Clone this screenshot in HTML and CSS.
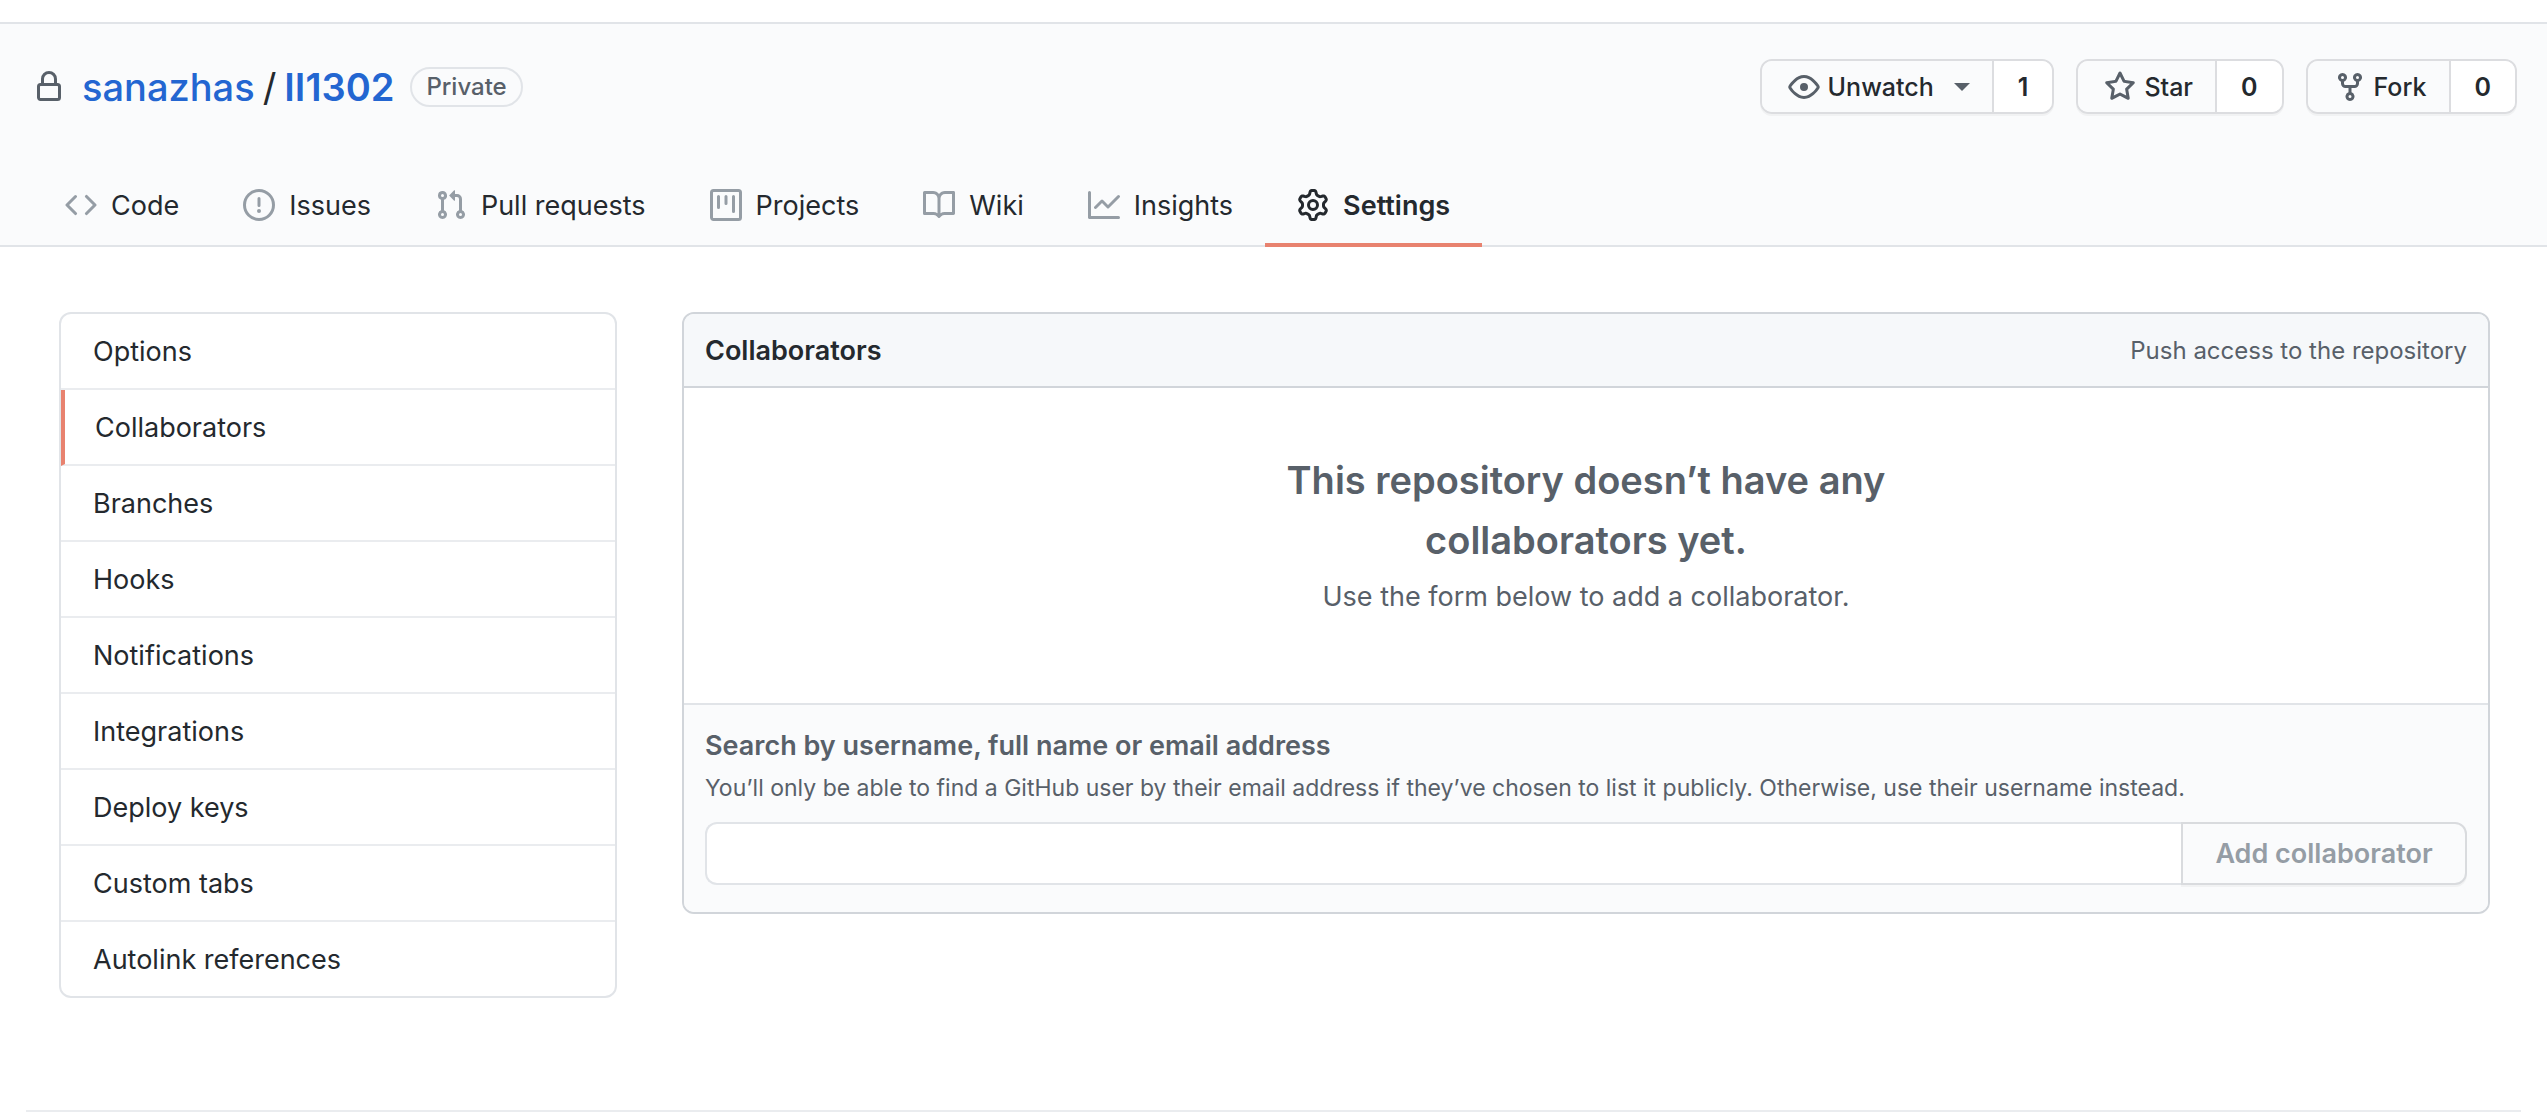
FILE: index.html
```html
<!DOCTYPE html>
<html lang="en">
<head>
    <meta charset="UTF-8">
    <meta name="viewport" content="width=device-width, initial-scale=1.0">
    <title>Collaborators</title>
    <link rel="stylesheet" href="styles.css">
</head>
<body>
    <header class="repo-head">
        <div class="title-row">
            <div class="repo-title">
                <svg class="lock" width="32" height="32" viewBox="0 0 16 16"><path fill-rule="evenodd" d="M4 4v2h-.25A1.75 1.75 0 002 7.75v5.5c0 .966.784 1.75 1.75 1.75h8.5A1.75 1.75 0 0014 13.25v-5.5A1.75 1.75 0 0012.25 6H12V4a4 4 0 10-8 0zm6.5 2V4a2.5 2.5 0 00-5 0v2h5zM12 7.5h.25a.25.25 0 01.25.25v5.5a.25.25 0 01-.25.25h-8.5a.25.25 0 01-.25-.25v-5.5a.25.25 0 01.25-.25H12z"/></svg>
                <a class="repo-link" href="#">sanazhas</a>
                <span class="slash">/</span>
                <a class="repo-link repo-name" href="#">II1302</a>
                <span class="badge">Private</span>
            </div>
            <div class="actions">
                <div class="btn-group">
                    <a class="btn" href="#">
                        <svg width="32" height="32" viewBox="0 0 16 16"><path fill-rule="evenodd" d="M1.679 7.932c.412-.621 1.242-1.75 2.366-2.717C5.175 4.242 6.527 3.5 8 3.5c1.473 0 2.824.742 3.955 1.715 1.124.967 1.954 2.096 2.366 2.717a.119.119 0 010 .136c-.412.621-1.242 1.75-2.366 2.717C10.825 11.758 9.473 12.5 8 12.5c-1.473 0-2.824-.742-3.955-1.715C2.92 9.818 2.09 8.69 1.679 8.068a.119.119 0 010-.136zM8 2c-1.981 0-3.67.992-4.933 2.078C1.797 5.169.88 6.423.43 7.1a1.619 1.619 0 000 1.798c.45.678 1.367 1.932 2.637 3.024C4.329 13.008 6.019 14 8 14c1.981 0 3.67-.992 4.933-2.078 1.27-1.091 2.187-2.345 2.637-3.023a1.619 1.619 0 000-1.798c-.45-.678-1.367-1.932-2.637-3.023C11.671 2.992 9.981 2 8 2zm0 8a2 2 0 100-4 2 2 0 000 4z"/></svg>
                        Unwatch
                        <span class="caret"></span>
                    </a>
                    <a class="count" href="#">1</a>
                </div>
                <div class="btn-group">
                    <a class="btn" href="#">
                        <svg width="32" height="32" viewBox="0 0 16 16"><path fill-rule="evenodd" d="M8 .25a.75.75 0 01.673.418l1.882 3.815 4.21.612a.75.75 0 01.416 1.279l-3.046 2.97.719 4.192a.75.75 0 01-1.088.791L8 12.347l-3.766 1.98a.75.75 0 01-1.088-.79l.72-4.194L.818 6.374a.75.75 0 01.416-1.28l4.21-.611L7.327.668A.75.75 0 018 .25zm0 2.445L6.615 5.5a.75.75 0 01-.564.41l-3.097.45 2.24 2.184a.75.75 0 01.216.664l-.528 3.084 2.769-1.456a.75.75 0 01.698 0l2.77 1.456-.53-3.084a.75.75 0 01.216-.664l2.24-2.183-3.096-.45a.75.75 0 01-.564-.41L8 2.694v.001z"/></svg>
                        Star
                    </a>
                    <a class="count" href="#">0</a>
                </div>
                <div class="btn-group">
                    <a class="btn" href="#">
                        <svg width="32" height="32" viewBox="0 0 16 16"><path fill-rule="evenodd" d="M5 3.25a.75.75 0 11-1.5 0 .75.75 0 011.5 0zm0 2.122a2.25 2.25 0 10-1.5 0v.878A2.25 2.25 0 005.75 8.5h1.5v2.128a2.251 2.251 0 101.5 0V8.5h1.5a2.25 2.25 0 002.25-2.25v-.878a2.25 2.25 0 10-1.5 0v.878a.75.75 0 01-.75.75h-4.5A.75.75 0 015 6.25v-.878zm3.75 7.378a.75.75 0 11-1.5 0 .75.75 0 011.5 0zm3-8.75a.75.75 0 100-1.5.75.75 0 000 1.5z"/></svg>
                        Fork
                    </a>
                    <a class="count" href="#">0</a>
                </div>
            </div>
        </div>
        <nav class="tabs">
            <a class="tab" href="#">
                <svg width="32" height="32" viewBox="0 0 16 16"><path fill-rule="evenodd" d="M4.72 3.22a.75.75 0 011.06 1.06L2.06 8l3.72 3.72a.75.75 0 11-1.06 1.06L.47 8.53a.75.75 0 010-1.06l4.25-4.25zm6.56 0a.75.75 0 10-1.06 1.06L13.94 8l-3.72 3.72a.75.75 0 101.06 1.06l4.25-4.25a.75.75 0 000-1.06l-4.25-4.25z"/></svg>
                Code
            </a>
            <a class="tab" href="#">
                <svg width="32" height="32" viewBox="0 0 16 16"><path fill-rule="evenodd" d="M8 1.5a6.5 6.5 0 100 13 6.5 6.5 0 000-13zM0 8a8 8 0 1116 0A8 8 0 010 8zm9 3a1 1 0 11-2 0 1 1 0 012 0zm-.25-6.25a.75.75 0 00-1.5 0v3.5a.75.75 0 001.5 0v-3.5z"/></svg>
                Issues
            </a>
            <a class="tab" href="#">
                <svg width="32" height="32" viewBox="0 0 16 16"><path fill-rule="evenodd" d="M7.177 3.073L9.573.677A.25.25 0 0110 .854v4.792a.25.25 0 01-.427.177L7.177 3.427a.25.25 0 010-.354zM3.75 2.5a.75.75 0 100 1.5.75.75 0 000-1.5zm-2.25.75a2.25 2.25 0 113 2.122v5.256a2.251 2.251 0 11-1.5 0V5.372A2.25 2.25 0 011.5 3.25zM11 2.5h-1V4h1a1 1 0 011 1v5.628a2.251 2.251 0 101.5 0V5A2.5 2.5 0 0011 2.5zm1 10.25a.75.75 0 111.5 0 .75.75 0 01-1.5 0zM3.75 12a.75.75 0 100 1.5.75.75 0 000-1.5z"/></svg>
                Pull requests
            </a>
            <a class="tab" href="#">
                <svg width="32" height="32" viewBox="0 0 16 16"><path fill-rule="evenodd" d="M1.75 0A1.75 1.75 0 000 1.75v12.5C0 15.216.784 16 1.75 16h12.5A1.75 1.75 0 0016 14.25V1.75A1.75 1.75 0 0014.25 0H1.75zM1.5 1.75a.25.25 0 01.25-.25h12.5a.25.25 0 01.25.25v12.5a.25.25 0 01-.25.25H1.75a.25.25 0 01-.25-.25V1.75zM11.75 3a.75.75 0 00-.75.75v7.5a.75.75 0 001.5 0v-7.5a.75.75 0 00-.75-.75zm-8.25.75a.75.75 0 011.5 0v5.5a.75.75 0 01-1.5 0v-5.5zM8 3a.75.75 0 00-.75.75v3.5a.75.75 0 001.5 0v-3.5A.75.75 0 008 3z"/></svg>
                Projects
            </a>
            <a class="tab" href="#">
                <svg width="32" height="32" viewBox="0 0 16 16"><path fill-rule="evenodd" d="M0 1.75A.75.75 0 01.75 1h4.253c1.227 0 2.317.59 3 1.501A3.744 3.744 0 0111.006 1h4.245a.75.75 0 01.75.75v10.5a.75.75 0 01-.75.75h-4.507a2.25 2.25 0 00-1.591.659l-.622.621a.75.75 0 01-1.06 0l-.622-.621A2.25 2.25 0 005.258 13H.75a.75.75 0 01-.75-.75V1.75zm8.755 3a2.25 2.25 0 012.25-2.25H14.5v9h-3.757c-.71 0-1.4.201-1.992.572l.004-7.322zm-1.504 7.324l.004-5.073-.002-2.253A2.25 2.25 0 005.003 2.5H1.5v9h3.757a3.75 3.75 0 011.994.574z"/></svg>
                Wiki
            </a>
            <a class="tab" href="#">
                <svg width="32" height="32" viewBox="0 0 16 16"><path fill-rule="evenodd" d="M1.5 1.75a.75.75 0 00-1.5 0v12.5c0 .414.336.75.75.75h14.5a.75.75 0 000-1.5H1.5V1.75zm14.28 2.53a.75.75 0 00-1.06-1.06L10 7.94 7.53 5.47a.75.75 0 00-1.06 0L3.22 8.72a.75.75 0 001.06 1.06L7 7.06l2.47 2.47a.75.75 0 001.06 0l5.25-5.25z"/></svg>
                Insights
            </a>
            <a class="tab selected" href="#">
                <svg width="32" height="32" viewBox="0 0 16 16"><path fill-rule="evenodd" d="M7.429 1.525a6.593 6.593 0 011.142 0c.036.003.108.036.137.146l.289 1.105c.147.56.55.967.997 1.189.174.086.341.183.501.29.417.278.97.423 1.53.27l1.102-.303c.11-.03.175.016.195.046.219.31.41.641.573.989.014.031.022.11-.059.19l-.815.806c-.411.406-.562.957-.53 1.456a4.588 4.588 0 010 .582c-.032.499.119 1.05.53 1.456l.815.806c.08.08.073.159.059.19a6.494 6.494 0 01-.573.99c-.02.029-.086.074-.195.045l-1.103-.303c-.559-.153-1.112-.008-1.529.27-.16.107-.327.204-.5.29-.449.222-.851.628-.998 1.189l-.289 1.105c-.029.11-.101.143-.137.146a6.613 6.613 0 01-1.142 0c-.036-.003-.108-.037-.137-.146l-.289-1.105c-.147-.56-.55-.967-.997-1.189a4.502 4.502 0 01-.501-.29c-.417-.278-.97-.423-1.53-.27l-1.102.303c-.11.03-.175-.016-.195-.046a6.492 6.492 0 01-.573-.989c-.014-.031-.022-.11.059-.19l.815-.806c.411-.406.562-.957.53-1.456a4.587 4.587 0 010-.582c.032-.499-.119-1.05-.53-1.456l-.815-.806c-.08-.08-.073-.159-.059-.19a6.44 6.44 0 01.573-.99c.02-.029.086-.075.195-.045l1.103.303c.559.153 1.112.008 1.529-.27.16-.107.327-.204.5-.29.449-.222.851-.628.998-1.189l.289-1.105c.029-.11.101-.143.137-.146zM8 0c-.236 0-.47.01-.701.03-.743.065-1.29.615-1.458 1.261l-.29 1.106c-.017.066-.078.158-.211.224a5.994 5.994 0 00-.668.386c-.123.082-.233.09-.3.071L3.27 2.776c-.644-.177-1.392.02-1.82.63a7.977 7.977 0 00-.704 1.217c-.315.675-.111 1.422.363 1.891l.815.806c.05.048.098.147.088.294a6.084 6.084 0 000 .772c.01.147-.038.246-.088.294l-.815.806c-.474.469-.678 1.216-.363 1.891.2.428.436.835.704 1.218.428.609 1.176.806 1.82.63l1.103-.303c.066-.019.176-.011.299.071.213.143.436.272.668.386.133.066.194.158.212.224l.289 1.106c.169.646.715 1.196 1.458 1.26a8.094 8.094 0 001.402 0c.743-.064 1.29-.614 1.458-1.26l.29-1.106c.017-.066.078-.158.211-.224a5.98 5.98 0 00.668-.386c.123-.082.233-.09.3-.071l1.102.302c.644.177 1.392-.02 1.82-.63.268-.382.505-.789.704-1.217.315-.675.111-1.422-.364-1.891l-.814-.806c-.05-.048-.098-.147-.088-.294a6.1 6.1 0 000-.772c-.01-.147.039-.246.088-.294l.814-.806c.475-.469.679-1.216.364-1.891a7.992 7.992 0 00-.704-1.218c-.428-.609-1.176-.806-1.82-.63l-1.103.303c-.066.019-.176.011-.299-.071a5.991 5.991 0 00-.668-.386c-.133-.066-.194-.158-.212-.224L10.16 1.29C9.99.645 9.444.095 8.701.031A8.094 8.094 0 008 0zm1.5 8a1.5 1.5 0 11-3 0 1.5 1.5 0 013 0zM11 8a3 3 0 11-6 0 3 3 0 016 0z"/></svg>
                Settings
            </a>
        </nav>
    </header>

    <main class="content">
        <aside class="side-menu">
            <a class="menu-item" href="#">Options</a>
            <a class="menu-item selected" href="#">Collaborators</a>
            <a class="menu-item" href="#">Branches</a>
            <a class="menu-item" href="#">Hooks</a>
            <a class="menu-item" href="#">Notifications</a>
            <a class="menu-item" href="#">Integrations</a>
            <a class="menu-item" href="#">Deploy keys</a>
            <a class="menu-item" href="#">Custom tabs</a>
            <a class="menu-item" href="#">Autolink references</a>
        </aside>

        <section class="box">
            <div class="box-header">
                <h3>Collaborators</h3>
                <span class="box-note">Push access to the repository</span>
            </div>
            <div class="blank">
                <h3>This repository doesn’t have any<br>collaborators yet.</h3>
                <p>Use the form below to add a collaborator.</p>
            </div>
            <form class="box-footer">
                <label for="search">Search by username, full name or email address</label>
                <p class="note">You’ll only be able to find a GitHub user by their email address if they’ve chosen to list it publicly. Otherwise, use their username instead.</p>
                <div class="input-group">
                    <input id="search" type="text">
                    <button type="button" disabled>Add collaborator</button>
                </div>
            </form>
        </section>
    </main>

    <footer class="page-foot"></footer>
</body>
</html>
```

FILE: styles.css
```css
* {
    box-sizing: border-box;
}
body {
    margin: 0;
    font-family: Inter, "Liberation Sans", sans-serif;
    font-size: 27px;
    color: #24292e;
    background: #fff;
}
a {
    color: inherit;
    text-decoration: none;
}
svg {
    fill: currentColor;
    flex: none;
}

/* repo header */
.repo-head {
    margin-top: 22px;
    height: 225px;
    background: #fafbfc;
    border-top: 2px solid #e1e4e8;
    border-bottom: 2px solid #e1e4e8;
    display: flex;
    flex-direction: column;
    justify-content: space-between;
}
.title-row {
    display: flex;
    justify-content: space-between;
    align-items: flex-start;
    padding: 35px 30px 0 33px;
}
.repo-title {
    display: flex;
    align-items: center;
    height: 55px;
    font-size: 38px;
}
.lock {
    color: #586069;
    margin-right: 17px;
}
.repo-link {
    color: #2366d1;
    font-weight: 500;
}
.slash {
    margin: 0 8px;
}
.repo-name {
    font-weight: 600;
}
.badge {
    margin-left: 16px;
    padding: 0 14px;
    height: 40px;
    line-height: 36px;
    font-size: 24px;
    font-weight: 500;
    color: #586069;
    border: 2px solid #e1e4e8;
    border-radius: 20px;
}
.actions {
    display: flex;
    gap: 22px;
}
.btn-group {
    display: flex;
    height: 55px;
    border: 2px solid #dcdde0;
    border-radius: 12px;
    box-shadow: 0 2px 0 rgba(27, 31, 35, 0.04);
    overflow: hidden;
    font-size: 25px;
    font-weight: 500;
}
.btn {
    display: flex;
    align-items: center;
    gap: 8px;
    padding: 0 22px 0 26px;
    background: #fafbfc;
}
.btn svg {
    color: #586069;
}
.caret {
    margin-left: 12px;
    border-top: 8px solid #586069;
    border-left: 8px solid transparent;
    border-right: 8px solid transparent;
}
.count {
    display: flex;
    align-items: center;
    padding: 0 24px;
    background: #fff;
    border-left: 2px solid #dcdde0;
    font-weight: 600;
}

/* tabs */
.tabs {
    display: flex;
    padding-left: 33px;
    margin-bottom: -2px;
}
.tab {
    display: flex;
    align-items: center;
    gap: 14px;
    height: 66px;
    padding: 0 32px 14px;
    border-bottom: 4px solid transparent;
}
.tab svg {
    color: #959da5;
}
.tab.selected {
    font-weight: 600;
    border-bottom-color: #e8826f;
}
.tab.selected svg {
    color: #24292e;
}

/* page content */
.content {
    display: flex;
    align-items: flex-start;
    gap: 65px;
    padding: 65px 57px 0 59px;
}
.side-menu {
    width: 558px;
    flex: none;
    border: 2px solid #e1e4e8;
    border-radius: 12px;
    overflow: hidden;
}
.menu-item {
    display: flex;
    align-items: center;
    height: 76px;
    padding-left: 32px;
    border-bottom: 2px solid #eaecef;
}
.menu-item:last-child {
    height: 74px;
    border-bottom: none;
}
.menu-item.selected {
    border-left: 4px solid #e8826f;
    padding-left: 30px;
}
.box {
    flex: 1;
    height: 602px;
    border: 2px solid #d1d5da;
    border-radius: 12px;
    display: flex;
    flex-direction: column;
    overflow: hidden;
}
.box-header {
    display: flex;
    justify-content: space-between;
    align-items: center;
    height: 74px;
    padding: 0 21px;
    background: #f6f8fa;
    border-bottom: 2px solid #d1d5da;
}
.box-header h3 {
    margin: 0;
    font-size: 27px;
    font-weight: 600;
}
.box-note {
    font-size: 24px;
    color: #586069;
}
.blank {
    flex: 1;
    padding-top: 62px;
    text-align: center;
    color: #586069;
}
.blank h3 {
    margin: 0;
    font-size: 38px;
    line-height: 60px;
    font-weight: 600;
}
.blank p {
    margin: 10px 0 0;
    font-size: 27px;
}
.box-footer {
    height: 209px;
    padding: 24px 21px 0;
    background: #fafbfc;
    border-top: 2px solid #e1e4e8;
}
.box-footer label {
    display: block;
    font-weight: 600;
    color: #586069;
}
.note {
    margin: 12px 0 20px;
    font-size: 23px;
    color: #586069;
}
.input-group {
    display: flex;
    height: 63px;
}
.input-group input {
    flex: 1;
    border: 2px solid #e1e4e8;
    border-right: none;
    border-radius: 12px 0 0 12px;
    background: #fff;
}
.input-group button {
    width: 286px;
    font: inherit;
    font-weight: 600;
    color: #959da5;
    background: #fafbfc;
    border: 2px solid #d9dbde;
    border-radius: 0 12px 12px 0;
    box-shadow: 0 2px 0 rgba(27, 31, 35, 0.04);
}

.page-foot {
    margin: 0 26px;
    position: absolute;
    top: 1110px;
    left: 0;
    right: 0;
    border-top: 2px solid #eaecef;
}
```
